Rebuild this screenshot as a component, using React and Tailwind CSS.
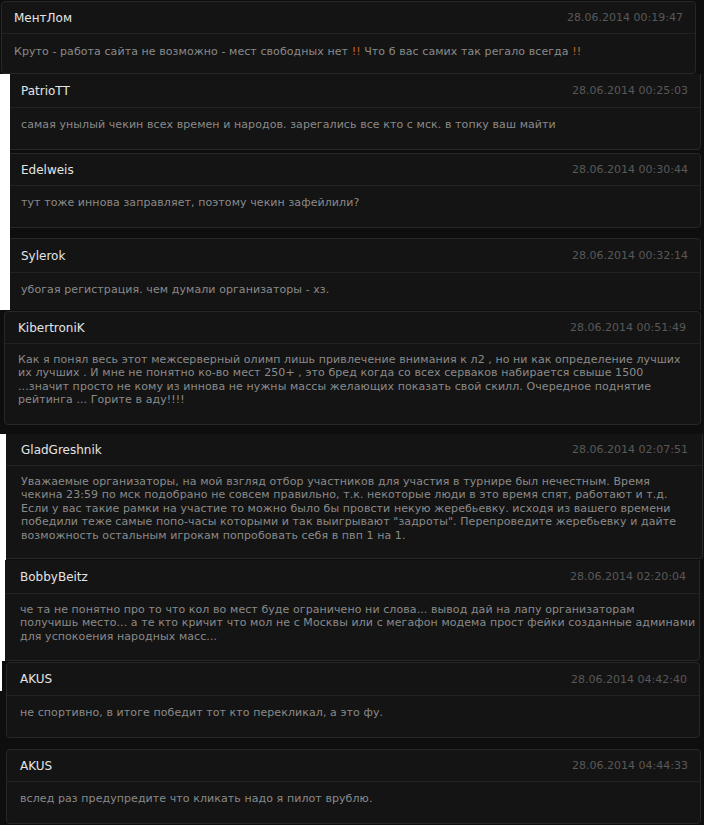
import React from "react";

const FONT = { fontFamily: '"DejaVu Sans", Verdana, sans-serif' };

function Card({ name, date, lines, cardCls, headCls, bodyCls }) {
  return (
    <div className={`bg-[#141414] border-[#272727] shrink-0 ${cardCls}`}>
      <div className={`flex items-center justify-between border-b border-[#222222] pr-[12px] ${headCls}`}>
        <span className="text-[12px] text-[#e4e4e4] leading-none">{name}</span>
        <span className="text-[11px] text-[#585858] leading-none">{date}</span>
      </div>
      <div className={`text-[11px] leading-[13.4px] tracking-[0.08px] text-[#8a8a8a] ${bodyCls}`}>
        {lines.map((l, i) => (
          <div key={i} className="whitespace-nowrap">{l}</div>
        ))}
      </div>
    </div>
  );
}

export default function App() {
  return (
    <div style={FONT} className="w-[704px] h-[825px] overflow-hidden bg-[#0e0e0e] flex flex-col">
      {/* Segment 1 */}
      <div className="h-[74px] shrink-0 pt-[1px] pl-[1px] bg-[#0e0e0e]">
        <Card
          name="МентЛом"
          date="28.06.2014 00:19:47"
          cardCls="w-[695px] border rounded-[4px]"
          headCls="h-[32px] pl-[12px]"
          bodyCls="h-[39px] pt-[11px] pl-[12px]"
          lines={[
            <span key="a">
              Круто - работа сайта не возможно - мест свободных нет{" "}
              <span className="text-[#c2652b]">!!</span> Что б вас самих так регало всегда{" "}
              <span className="text-[#c2652b]">!!</span>
            </span>,
          ]}
        />
      </div>

      {/* Segment 2 */}
      <div className="h-[236px] shrink-0 flex bg-[#0e0e0e]">
        <div className="w-[10px] shrink-0 bg-white" />
        <div className="flex-1 overflow-hidden flex flex-col">
          <Card
            name="PatrioTT"
            date="28.06.2014 00:25:03"
            cardCls="-ml-[3px] w-[694px] border border-t-0 rounded-b-[4px]"
            headCls="h-[34px] pl-[13px]"
            bodyCls="h-[41px] pt-[10px] pl-[13px]"
            lines={["самая унылый чекин всех времен и народов. зарегались все кто с мск. в топку ваш майти"]}
          />
          <div className="h-[3px] shrink-0" />
          <Card
            name="Edelweis"
            date="28.06.2014 00:30:44"
            cardCls="-ml-[3px] w-[694px] border rounded-[4px]"
            headCls="h-[32px] pl-[13px]"
            bodyCls="h-[41px] pt-[10px] pl-[13px]"
            lines={["тут тоже иннова заправляет, поэтому чекин зафейлили?"]}
          />
          <div className="h-[10px] shrink-0" />
          <Card
            name="Sylerok"
            date="28.06.2014 00:32:14"
            cardCls="-ml-[3px] w-[694px] border rounded-[4px]"
            headCls="h-[34px] pl-[13px]"
            bodyCls="h-[41px] pt-[10px] pl-[13px]"
            lines={["убогая регистрация. чем думали организаторы - хз."]}
          />
        </div>
      </div>

      {/* Segment 3 */}
      <div className="h-[124px] shrink-0 pt-[1px] pl-[4px] bg-[#0e0e0e] overflow-hidden">
        <Card
          name="KibertroniK"
          date="28.06.2014 00:51:49"
          cardCls="w-[697px] border rounded-[4px]"
          headCls="h-[32px] pl-[13px] pr-[14px]"
          bodyCls="h-[80px] pt-[9px] pl-[13px]"
          lines={[
            "Как я понял весь этот межсерверный олимп лишь привлечение внимания к л2 , но ни как определение лучших",
            "их лучших . И мне не понятно ко-во мест 250+ , это бред когда со всех серваков набирается свыше 1500",
            "...значит просто не кому из иннова не нужны массы желающих показать свой скилл. Очередное поднятие",
            "рейтинга ... Горите в аду!!!!",
          ]}
        />
      </div>

      {/* Segment 4 */}
      <div className="h-[126px] shrink-0 flex bg-[#0e0e0e]">
        <div className="w-[6px] shrink-0 bg-white" />
        <div className="flex-1 overflow-hidden">
          <Card
            name="GladGreshnik"
            date="28.06.2014 02:07:51"
            cardCls="w-[697px] border border-l-0 border-t-0 rounded-br-[4px]"
            headCls="h-[32px] pl-[15px] pr-[14px]"
            bodyCls="h-[92px] pt-[9px] pl-[15px]"
            lines={[
              "Уважаемые организаторы, на мой взгляд отбор участников для участия в турнире был нечестным. Время",
              "чекина 23:59 по мск подобрано не совсем правильно, т.к. некоторые люди в это время спят, работают и т.д.",
              "Если у вас такие рамки на участие то можно было бы провсти некую жеребьевку. исходя из вашего времени",
              "победили теже самые попо-часы которыми и так выигрывают \"задроты\". Перепроведите жеребьевку и дайте",
              "возможность остальным игрокам попробовать себя в пвп 1 на 1.",
            ]}
          />
        </div>
      </div>

      {/* Segment 5 */}
      <div className="h-[101px] shrink-0 flex bg-[#0e0e0e]">
        <div className="w-[5px] shrink-0 bg-white" />
        <div className="flex-1 overflow-hidden">
          <Card
            name="BobbyBeitz"
            date="28.06.2014 02:20:04"
            cardCls="w-[695px] border border-l-0 border-t-0 rounded-br-[4px]"
            headCls="h-[34px] pl-[15px] pr-[13px]"
            bodyCls="h-[66px] pt-[9px] pl-[15px]"
            lines={[
              "че та не понятно про то что кол во мест буде ограничено ни слова... вывод дай на лапу организаторам",
              "получишь место... а те кто кричит что мол не с Москвы или с мегафон модема прост фейки созданные админами",
              "для успокоения народных масс...",
            ]}
          />
        </div>
      </div>

      {/* Segment 6 */}
      <div className="flex-1 flex bg-[#0e0e0e]">
        <div className="w-[2px] shrink-0 flex flex-col">
          <div className="h-[30px] bg-white" />
        </div>
        <div className="flex-1 flex flex-col pt-[1px]">
          <Card
            name="AKUS"
            date="28.06.2014 04:42:40"
            cardCls="ml-[4px] w-[694px] border rounded-[4px]"
            headCls="h-[33px] pl-[13px]"
            bodyCls="h-[41px] pt-[10px] pl-[13px]"
            lines={["не спортивно, в итоге победит тот кто перекликал, а это фу."]}
          />
          <div className="h-[11px] shrink-0" />
          <Card
            name="AKUS"
            date="28.06.2014 04:44:33"
            cardCls="ml-[4px] w-[695px] border rounded-[4px]"
            headCls="h-[32px] pl-[13px]"
            bodyCls="h-[41px] pt-[10px] pl-[13px]"
            lines={["вслед раз предупредите что кликать надо я пилот врублю."]}
          />
        </div>
      </div>
    </div>
  );
}
